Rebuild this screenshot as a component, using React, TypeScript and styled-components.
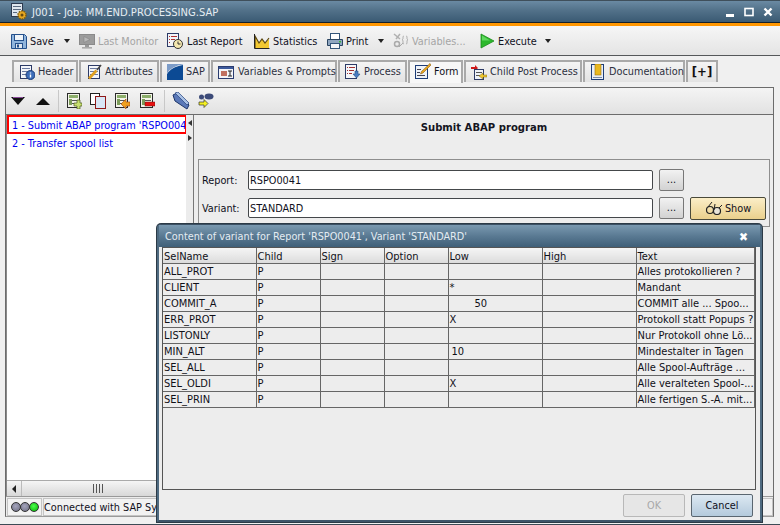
import React from 'react';
import styled, { createGlobalStyle, css } from 'styled-components';

const GlobalStyle = createGlobalStyle`
    html, body {
        margin: 0;
        padding: 0;
        background: #ececec;
    }
    * {
        box-sizing: border-box;
    }
`;

const Window = styled.div`
    position: relative;
    width: 780px;
    height: 525px;
    overflow: hidden;
    display: flex;
    flex-direction: column;
    background: #f0f0f0;
    font-family: "DejaVu Sans Condensed", "DejaVu Sans", sans-serif;
    font-stretch: condensed;
    font-size: 10.8px;
    color: #10101c;
    border-bottom: 1px solid #3c4a55;
`;

const TitleBar = styled.div`
    height: 23px;
    flex: none;
    display: flex;
    align-items: center;
    padding: 0 7px 0 10px;
    gap: 4px;
    color: #e6edf3;
    font-size: 11.1px;
    background: linear-gradient(#6a8aa3 0%, #527189 45%, #3a5a73 100%);
    border-bottom: 1px solid #15202a;
    border-top: 1px solid #3f4f5b;
`;

const TitleText = styled.span`
    flex: 1;
    padding-top: 1px;
`;

const WindowButtons = styled.div`
    display: flex;
    align-items: center;
    gap: 9px;
`;

const OrangeStrip = styled.div`
    height: 3px;
    flex: none;
    background: #ff9600;
`;

const MainToolbar = styled.div`
    height: 30px;
    flex: none;
    display: flex;
    align-items: center;
    padding: 1px 0 0 11px;
    background: linear-gradient(#f6f6f6, #e4e4e4);
    border-bottom: 1px solid #55585a;
`;

const ToolItem = styled.div<{ $w: number; $off?: boolean }>`
    width: ${(p) => p.$w}px;
    flex: none;
    display: flex;
    align-items: center;
    gap: 3px;
    white-space: nowrap;
    color: ${(p) => (p.$off ? '#a5a5a5' : '#10101c')};
`;

const Caret = styled.span<{ $w: number }>`
    width: ${(p) => p.$w}px;
    flex: none;
    &::before {
        content: '';
        display: block;
        width: 0;
        height: 0;
        border-left: 3.5px solid transparent;
        border-right: 3.5px solid transparent;
        border-top: 4px solid #222;
    }
`;

const TabStrip = styled.div`
    height: 31px;
    flex: none;
    display: flex;
    align-items: flex-start;
    padding: 4px 0 0 12px;
    gap: 1px;
    background: #f0f0f0;
`;

const Tab = styled.div<{ $w: number; $active?: boolean }>`
    width: ${(p) => p.$w}px;
    height: 22px;
    flex: none;
    display: flex;
    align-items: center;
    padding: 0 0 1px 5px;
    gap: 3px;
    white-space: nowrap;
    color: #2c3040;
    background: linear-gradient(#f4f4f4, #e3e3e3);
    border: 2px solid #a9a9a9;
    border-bottom: 0;
    ${(p) =>
        p.$active &&
        css`
            height: 23px;
            color: #10101c;
            padding-bottom: 3px;
            background: #f7f7f7;
        `}
`;

const PlusTab = styled(Tab)`
    justify-content: center;
    padding-left: 0;
    font-weight: bold;
    font-size: 13px;
    color: #111;
`;

const Panel = styled.div`
    flex: 1;
    min-height: 0;
    margin: 0 6px 7px 5px;
    display: flex;
    flex-direction: column;
    border: 1px solid #6c6c6c;
    border-bottom-color: #9a9a9a;
`;

const SubToolbar = styled.div`
    height: 27px;
    flex: none;
    display: flex;
    align-items: center;
    padding-left: 5px;
    background: linear-gradient(#f4f4f4, #e2e2e2);
    border-bottom: 1px solid #6c6c6c;
`;

const SubTool = styled.div<{ $w: number }>`
    width: ${(p) => p.$w}px;
    flex: none;
    display: flex;
    align-items: center;
`;

const SubSep = styled.div`
    width: 1px;
    height: 22px;
    flex: none;
    margin: 0 7px 0 2px;
    background: #c8c8c8;
`;

const Body = styled.div`
    flex: 1;
    min-height: 0;
    display: flex;
`;

const LeftColumn = styled.div`
    width: 180px;
    flex: none;
    display: flex;
    flex-direction: column;
    border-left: 1px solid #8a8a8a;
`;

const StepList = styled.div`
    flex: 1;
    background: #fff;
    overflow: hidden;
    color: #0000f0;
`;

const Step = styled.div<{ $selected?: boolean }>`
    height: 18px;
    line-height: 16px;
    padding-left: 5px;
    white-space: nowrap;
    overflow: hidden;
    ${(p) =>
        p.$selected &&
        css`
            height: 19px;
            border: 2px solid #ff0000;
            border-right-width: 1px;
            padding-left: 3px;
            line-height: 17px;
        `}
`;

const StepGap = styled.div`
    height: 2px;
`;

const Scrollbar = styled.div`
    height: 16px;
    flex: none;
    display: flex;
    align-items: center;
    background: linear-gradient(#f5f5f5, #d8d8d8);
    border-top: 1px solid #aaa;
`;

const ScrollArrow = styled.div`
    width: 15px;
    height: 100%;
    flex: none;
    display: flex;
    align-items: center;
    justify-content: center;
    border-right: 1px solid #bbb;
    &::before {
        content: '';
        border-top: 4px solid transparent;
        border-bottom: 4px solid transparent;
        border-right: 4px solid #222;
    }
`;

const Grip = styled.div`
    margin-left: 71px;
    width: 11px;
    height: 9px;
    background: repeating-linear-gradient(90deg, #555 0 1px, transparent 1px 3px);
`;

const Splitter = styled.div`
    width: 8px;
    flex: none;
    display: flex;
    flex-direction: column;
    align-items: center;
    gap: 9px;
    padding-top: 5px;
    background: #ececec;
    border-right: 1px solid #777;
`;

const SplitArrow = styled.div<{ $dir: 'left' | 'right' }>`
    width: 0;
    height: 0;
    border-top: 3.5px solid transparent;
    border-bottom: 3.5px solid transparent;
    ${(p) =>
        p.$dir === 'left'
            ? css`border-right: 4px solid #333;`
            : css`border-left: 4px solid #333;`}
`;

const RightPane = styled.div`
    flex: 1;
    padding: 0 3px 0 4px;
    background: #ededed;
`;

const PaneTitle = styled.div`
    height: 44px;
    padding-top: 6px;
    text-align: center;
    font-weight: bold;
    font-size: 11.2px;
    color: #15151f;
`;

const FieldBox = styled.div`
    height: 68px;
    padding: 9px 3px 0 3px;
    display: flex;
    flex-direction: column;
    gap: 6px;
    border: 1px solid #8e8e8e;
`;

const FieldRow = styled.div`
    height: 22px;
    display: flex;
    align-items: center;
`;

const FieldLabel = styled.label`
    width: 46px;
    flex: none;
`;

const FieldInput = styled.div`
    width: 405px;
    height: 20px;
    flex: none;
    display: flex;
    align-items: center;
    padding-left: 1px;
    background: #fff;
    border: 1px solid #44474a;
    border-radius: 2px;
`;

const DotsButton = styled.div`
    width: 25px;
    height: 22px;
    flex: none;
    margin-left: 6px;
    text-align: center;
    line-height: 20px;
    background: linear-gradient(#f2f2f2, #d2d2d2);
    border: 1px solid #777;
    border-radius: 2px;
`;

const ShowButton = styled.div`
    width: 76px;
    height: 23px;
    flex: none;
    margin-left: 6px;
    display: flex;
    align-items: center;
    justify-content: center;
    gap: 2px;
    background: linear-gradient(#fbeec8, #ead08c);
    border: 1px solid #4a4a3a;
    border-radius: 2px;
`;

const StatusBar = styled.div`
    height: 20px;
    flex: none;
    display: flex;
    gap: 1px;
    padding: 1px 0 0 1px;
    background: #ececec;
    border-top: 1px solid #999;
`;

const Lights = styled.div`
    width: 35px;
    flex: none;
    display: flex;
    align-items: center;
    padding-left: 3px;
    background: #f2f2f2;
    border: 1px solid #c4c4c4;
`;

const Light = styled.div<{ $on?: boolean }>`
    width: 10px;
    height: 10px;
    margin-right: -1px;
    border-radius: 50%;
    border: 1px solid #333;
    background: ${(p) => (p.$on ? 'radial-gradient(circle at 45% 40%, #4dff4d, #00b000)' : 'radial-gradient(circle at 45% 40%, #a4a4bc, #6c6c80)')};
`;

const StatusText = styled.div`
    flex: 1;
    line-height: 17px;
    white-space: nowrap;
    overflow: hidden;
    border: 1px solid #c4c4c4;
    background: #f2f2f2;
`;

/* dialog floats over the form */
const Dialog = styled.div`
    position: absolute;
    left: 157px;
    top: 224px;
    width: 605px;
    height: 298px;
    display: flex;
    flex-direction: column;
    background: #ededed;
    border: 2px solid #4e6a80;
    border-top-width: 1px;
    border-top-color: #3c5165;
    border-bottom-color: #3e5468;
    border-radius: 4px 4px 0 0;
    box-shadow: 0 0 0 1px #2c3a46;
`;

const DialogTitle = styled.div`
    height: 22px;
    flex: none;
    display: flex;
    align-items: center;
    justify-content: space-between;
    padding: 1px 12px 0 6px;
    color: #e4ecf2;
    background: linear-gradient(#7a99b0 0%, #5a7a93 50%, #3f5f78 100%);
`;

const DialogClose = styled.span`
    font-weight: bold;
    font-size: 12px;
    color: #fff;
`;

const TableWrap = styled.div`
    height: 243px;
    flex: none;
    margin: 0 4px 0 3px;
    background: #ededed;
    border: 1px solid #555;
`;

const VariantTable = styled.table`
    width: 592px;
    table-layout: fixed;
    border-collapse: collapse;
    color: #101018;
`;

const HeadCell = styled.th<{ $w?: number }>`
    ${(p) => p.$w && css`width: ${p.$w}px;`}
    height: 15px;
    padding: 2px 0 0 1px;
    text-align: left;
    font-weight: normal;
    font-size: 11px;
    line-height: 13px;
    background: linear-gradient(#f5f5f5, #dcdcdc);
    border-right: 1px solid #666;
    border-bottom: 1px solid #666;
`;

const Cell = styled.td<{ $indent?: number }>`
    height: 16px;
    padding: 1px 0 0 ${(p) => p.$indent ?? 1}px;
    font-size: 11px;
    line-height: 14px;
    white-space: nowrap;
    overflow: hidden;
    border-right: 1px solid #666;
    border-bottom: 1px solid #666;
`;

const DialogFooter = styled.div`
    flex: 1;
    display: flex;
    justify-content: flex-end;
    align-items: flex-start;
    gap: 6px;
    padding: 4px 7px 0 0;
`;

const DialogButton = styled.div<{ $off?: boolean }>`
    width: 62px;
    height: 23px;
    display: flex;
    align-items: center;
    justify-content: center;
    border-radius: 2px;
    ${(p) =>
        p.$off
            ? css`
                  color: #a8a8a8;
                  border: 1px solid #b8b8b8;
                  background: #e6e6e6;
              `
            : css`
                  color: #10101c;
                  border: 1px solid #5a6670;
                  background: linear-gradient(#dce8f2, #b4cadc);
              `}
`;

const Svg = ({ children, w = 16, h = 16 }: { children: React.ReactNode; w?: number; h?: number }) => (
    <svg width={w} height={h} viewBox={`0 0 ${w} ${h}`} style={{ flex: 'none', display: 'block' }}>
        {children}
    </svg>
);

const DocLines = ({ x = 1, y = 1, w = 11, h = 13 }: { x?: number; y?: number; w?: number; h?: number }) => (
    <>
        <rect x={x + 0.5} y={y + 0.5} width={w} height={h} fill="#f4f6fa" stroke="#2c3a66" />
        <path d={`M${x + 2} ${y + 3.5}h${w - 3}M${x + 2} ${y + 6.5}h${w - 3}M${x + 2} ${y + 9.5}h${w - 3}`} stroke="#6a7aa0" />
    </>
);

const GreenDoc = () => (
    <>
        <rect x="1.5" y="0.5" width="12" height="14" fill="#f4f4ea" stroke="#2a2a2a" />
        <rect x="3" y="2" width="9" height="3" fill="#8cae6a" />
        <path d="M3 7.5h9M3 10.5h6" stroke="#555" />
        <rect x="3" y="6" width="3" height="6" fill="#7c9c5a" />
    </>
);

const TitleIcon = () => (
    <Svg w={18} h={18}>
        <rect x="1.5" y="0.5" width="11" height="13" fill="#dfe6ee" stroke="#2c3a50" />
        <path d="M3 3.5h8M3 6.5h8M3 9.5h4" stroke="#5a6a80" />
        <circle cx="12" cy="12" r="4" fill="#e8a820" stroke="#7a5a10" strokeWidth="1.5" strokeDasharray="1.5 1" />
        <circle cx="12" cy="12" r="1.5" fill="#6a4a10" />
    </Svg>
);

const SaveIcon = () => (
    <Svg>
        <path d="M0.5 1.5h13l2 2v12h-15z" fill="#8fb4dc" stroke="#24508c" />
        <rect x="3.5" y="1.5" width="9" height="6" fill="#eef3f8" stroke="#24508c" />
        <rect x="4.5" y="10.5" width="7" height="5" fill="#dfe6ee" stroke="#24508c" />
        <rect x="6" y="11.5" width="2" height="3" fill="#24508c" />
    </Svg>
);

const MonitorIcon = () => (
    <Svg>
        <rect x="0.5" y="1.5" width="15" height="10" fill="#9c9c9c" stroke="#8a8a8a" />
        <path d="M5 3.5l6 3-6 3z" fill="#b8b8b8" stroke="#858585" strokeWidth="0.6" />
        <rect x="6" y="12" width="4" height="2" fill="#999" />
        <rect x="3" y="14" width="10" height="1.6" fill="#aaa" />
    </Svg>
);

const ReportIcon = () => (
    <Svg w={17}>
        <rect x="0.5" y="0.5" width="11" height="13" fill="#f2f4f8" stroke="#2c3a66" />
        <path d="M2 3.5h1M4 3.5h6M2 6.5h1M4 6.5h4M2 9.5h1" stroke="#b03030" />
        <circle cx="11" cy="11" r="4.5" fill="#f4e8b0" stroke="#333" />
        <path d="M11 8.5v2.5h2.5" fill="none" stroke="#333" />
    </Svg>
);

const StatsIcon = () => (
    <Svg w={16}>
        <path d="M1 15V3l4 7 3-4 3 4 4-4v9z" fill="#f2c832" />
        <path d="M1 15V3l4 7 3-4 3 4 4-5" fill="none" stroke="#5a4610" strokeWidth="1.2" />
        <path d="M0.5 1v14.5h15" fill="none" stroke="#222" />
    </Svg>
);

const PrintIcon = () => (
    <Svg>
        <rect x="3.5" y="0.5" width="9" height="6" fill="#fff" stroke="#33557a" />
        <path d="M0.5 6.5h15v6h-15z" fill="#8fa6c0" stroke="#2a4460" />
        <rect x="3.5" y="10.5" width="9" height="5" fill="#f4f6f8" stroke="#33557a" />
        <rect x="12" y="8" width="2" height="1.5" fill="#38b838" />
    </Svg>
);

const VariablesIcon = () => (
    <Svg>
        <path d="M1 1l6 5M7 1L3 6" stroke="#b0b0b0" strokeWidth="1.5" fill="none" />
        <circle cx="4" cy="11" r="2.5" fill="none" stroke="#aaa" strokeWidth="1.5" />
        <path d="M6 14l4-4M11 3c-1 0-1 1-1 2s0 1-1 2c1 0 1 1 1 2s0 2 1 2M13 3c1 0 1 1 1 2s0 1 1 2c-1 0-1 1-1 2s0 2-1 2" stroke="#aaa" fill="none" />
    </Svg>
);

const ExecuteIcon = () => (
    <Svg w={15}>
        <path d="M1 1l13 7-13 7z" fill="#2cb82c" stroke="#1a8a1a" strokeWidth="0.8" />
        <path d="M2 2.5v5h8z" fill="#5ed85e" />
    </Svg>
);

const HeaderIcon = () => (
    <Svg>
        <DocLines />
        <circle cx="11.5" cy="11" r="4.5" fill="#3c6cb8" stroke="#1c3c78" />
        <path d="M11.5 8.5v1M11.5 10.5v3" stroke="#fff" strokeWidth="1.4" />
    </Svg>
);

const AttributesIcon = () => (
    <Svg>
        <DocLines x={2} />
        <path d="M15 1l-4 5" stroke="#444" strokeWidth="1.6" />
        <path d="M10.5 6.5L3 14.5" stroke="#e0a020" strokeWidth="2.6" />
    </Svg>
);

const SapIcon = () => (
    <Svg>
        <path d="M0 16V10C3 5 9 2 16 1v15z" fill="#0c4a94" />
        <path d="M0 0h16v0.6C9 1.6 3 4.6 0 9.5z" fill="#7c9cc8" />
    </Svg>
);

const VariablesTabIcon = () => (
    <Svg w={17}>
        <rect x="0.5" y="2.5" width="15" height="12" fill="#f2f4f8" stroke="#2a3c70" />
        <rect x="1" y="3" width="14" height="2" fill="#3c5a9c" />
        <rect x="3" y="7" width="6" height="5" fill="#c07060" />
        <path d="M10 7h4M12 7v5M10 12h4" stroke="#222" />
    </Svg>
);

const ProcessIcon = () => (
    <Svg>
        <rect x="0.5" y="0.5" width="11" height="14" fill="#f4f6fa" stroke="#2c3a66" />
        <path d="M2 3.5h1M4 3.5h6M2 6.5h1M4 6.5h5M2 9.5h1M4 9.5h3" stroke="#a03030" />
        <path d="M10 7h3v3h2l-3.5 4L8 10h2z" fill="#4a7cc0" stroke="#24508c" strokeWidth="0.6" />
    </Svg>
);

const FormIcon = () => (
    <Svg>
        <rect x="0.5" y="2.5" width="12" height="13" fill="#eef2f8" stroke="#1c3c78" />
        <path d="M2 6.5h4M2 9.5h3M2 12.5h8" stroke="#445" />
        <path d="M15 0.5l1 1.5-8 8-2.5 1 1-2.5z" fill="#eaa820" stroke="#8a5a10" strokeWidth="0.6" />
    </Svg>
);

const ChildIcon = () => (
    <Svg>
        <path d="M0 3h4V1l3 3-3 3V5H0z" fill="#d01818" />
        <rect x="3.5" y="5.5" width="9" height="10" fill="#eef2f8" stroke="#2c3a66" />
        <path d="M5 8.5h6M5 11.5h4" stroke="#555" />
        <path d="M16 11h-4V9l-4 3 4 3v-2h4z" fill="#f0c830" stroke="#8a7010" strokeWidth="0.5" />
    </Svg>
);

const DocumentationIcon = () => (
    <Svg>
        <rect x="1.5" y="0.5" width="12" height="15" fill="#e8eef6" stroke="#1c3c78" />
        <rect x="5" y="0" width="6" height="11" fill="#e8b820" stroke="#9a7010" strokeWidth="0.6" />
        <path d="M3 13.5h9" stroke="#7a8aa8" />
    </Svg>
);

const MoveDown = () => (
    <Svg w={14} h={8}>
        <path d="M0 0h14L7 8z" fill="#111" />
        <path d="M2 0.5h10" stroke="#8a4a9a" />
    </Svg>
);

const MoveUp = () => (
    <Svg w={14} h={7}>
        <path d="M7 0l7 7H0z" fill="#111" />
    </Svg>
);

const AddStep = () => (
    <Svg>
        <GreenDoc />
        <path d="M11 7v3H8v3h3v3h3v-3h2v-3h-2V7z" fill="#c8e070" stroke="#4a5a20" strokeWidth="0.7" />
    </Svg>
);

const CopyStep = () => (
    <Svg>
        <rect x="0.5" y="0.5" width="9" height="11" fill="#fff" stroke="#222" />
        <rect x="5.5" y="3.5" width="10" height="12" fill="#d8e6f6" stroke="#901818" />
    </Svg>
);

const MoveStep = () => (
    <Svg>
        <GreenDoc />
        <path d="M16 9h-4V6L7 11l5 5v-3h4z" fill="#f0a020" stroke="#a04010" strokeWidth="0.6" />
    </Svg>
);

const RemoveStep = () => (
    <Svg>
        <GreenDoc />
        <rect x="6" y="9" width="10" height="4" fill="#e81010" stroke="#701010" strokeWidth="0.5" />
    </Svg>
);

const FolderIcon = () => (
    <Svg w={18} h={18}>
        <path d="M1 3l4-2 12 12-2 4L3 9z" fill="#5a78b8" stroke="#1c3468" />
        <path d="M3 1l3-1 11 11-2 2z" fill="#a8c0e4" stroke="#24407c" strokeWidth="0.7" />
    </Svg>
);

const ChatIcon = () => (
    <Svg w={16} h={16}>
        <ellipse cx="11" cy="3.5" rx="4.5" ry="3" fill="#3c4a78" />
        <ellipse cx="3.5" cy="4" rx="2.5" ry="2.5" fill="#3c4a78" />
        <path d="M1 9h5V6.5l4 4-4 4V12H1z" fill="#f4f020" stroke="#333" strokeWidth="0.7" />
    </Svg>
);

const GlassesIcon = () => (
    <Svg w={18} h={14}>
        <circle cx="5" cy="9" r="3.5" fill="none" stroke="#222" strokeWidth="1.2" />
        <circle cx="12" cy="10" r="3.5" fill="#e8e4d8" stroke="#222" strokeWidth="1.2" />
        <path d="M3 6l4-5M9 9l1-6M14 7l3-3" fill="none" stroke="#222" />
    </Svg>
);

const rows = [
    ['ALL_PROT', 'P', '', 'Alles protokollieren ?'],
    ['CLIENT', 'P', '*', 'Mandant'],
    ['COMMIT_A', 'P', '50', 'COMMIT alle ... Spoo...'],
    ['ERR_PROT', 'P', 'X', 'Protokoll statt Popups ?'],
    ['LISTONLY', 'P', '', 'Nur Protokoll ohne Lö...'],
    ['MIN_ALT', 'P', '10', 'Mindestalter in Tagen'],
    ['SEL_ALL', 'P', '', 'Alle Spool-Aufträge ...'],
    ['SEL_OLDI', 'P', 'X', 'Alle veralteten Spool-...'],
    ['SEL_PRIN', 'P', '', 'Alle fertigen S.-A. mit...'],
];

const lowIndent = (low: string) => (low === '50' ? 26 : low === '10' ? 3 : 1);

const App = () => {
    return (
        <Window>
            <GlobalStyle />
            <TitleBar>
                <TitleIcon />
                <TitleText>J001 - Job: MM.END.PROCESSING.SAP</TitleText>
                <WindowButtons>
                    <Svg w={10} h={10}>
                        <rect x="1" y="7" width="8" height="3" fill="#fff" />
                    </Svg>
                    <Svg w={10} h={10}>
                        <rect x="1" y="1.5" width="8" height="7" fill="none" stroke="#fff" strokeWidth="1.6" />
                    </Svg>
                    <Svg w={10} h={10}>
                        <path d="M1.5 1.5l7 7M8.5 1.5l-7 7" stroke="#fff" strokeWidth="2.4" />
                    </Svg>
                </WindowButtons>
            </TitleBar>
            <OrangeStrip />
            <MainToolbar>
                <ToolItem $w={53}><SaveIcon />Save</ToolItem>
                <Caret $w={15} />
                <ToolItem $w={88} $off><MonitorIcon />Last Monitor</ToolItem>
                <ToolItem $w={87}><ReportIcon />Last Report</ToolItem>
                <ToolItem $w={73}><StatsIcon />Statistics</ToolItem>
                <ToolItem $w={51}><PrintIcon />Print</ToolItem>
                <Caret $w={15} />
                <ToolItem $w={87} $off><VariablesIcon />Variables...</ToolItem>
                <ToolItem $w={65}><ExecuteIcon />Execute</ToolItem>
                <Caret $w={10} />
            </MainToolbar>
            <TabStrip>
                <Tab $w={66}><HeaderIcon />Header</Tab>
                <Tab $w={80}><AttributesIcon />Attributes</Tab>
                <Tab $w={50}><SapIcon />SAP</Tab>
                <Tab $w={126}><VariablesTabIcon />Variables &amp; Prompts</Tab>
                <Tab $w={69}><ProcessIcon />Process</Tab>
                <Tab $w={55} $active><FormIcon />Form</Tab>
                <Tab $w={118}><ChildIcon />Child Post Process</Tab>
                <Tab $w={102}><DocumentationIcon />Documentation</Tab>
                <PlusTab $w={32}>[+]</PlusTab>
            </TabStrip>
            <Panel>
                <SubToolbar>
                    <SubTool $w={25}><MoveDown /></SubTool>
                    <SubTool $w={20}><MoveUp /></SubTool>
                    <SubSep />
                    <SubTool $w={24}><AddStep /></SubTool>
                    <SubTool $w={24}><CopyStep /></SubTool>
                    <SubTool $w={25}><MoveStep /></SubTool>
                    <SubTool $w={23}><RemoveStep /></SubTool>
                    <SubSep />
                    <SubTool $w={26}><FolderIcon /></SubTool>
                    <SubTool $w={20}><ChatIcon /></SubTool>
                </SubToolbar>
                <Body>
                    <LeftColumn>
                        <StepList>
                            <Step $selected>1 - Submit ABAP program 'RSPO0041'</Step>
                            <StepGap />
                            <Step>2 - Transfer spool list</Step>
                        </StepList>
                        <Scrollbar>
                            <ScrollArrow />
                            <Grip />
                        </Scrollbar>
                    </LeftColumn>
                    <Splitter>
                        <SplitArrow $dir="left" />
                        <SplitArrow $dir="right" />
                    </Splitter>
                    <RightPane>
                        <PaneTitle>Submit ABAP program</PaneTitle>
                        <FieldBox>
                            <FieldRow>
                                <FieldLabel>Report:</FieldLabel>
                                <FieldInput>RSPO0041</FieldInput>
                                <DotsButton>...</DotsButton>
                            </FieldRow>
                            <FieldRow>
                                <FieldLabel>Variant:</FieldLabel>
                                <FieldInput>STANDARD</FieldInput>
                                <DotsButton>...</DotsButton>
                                <ShowButton><GlassesIcon />Show</ShowButton>
                            </FieldRow>
                        </FieldBox>
                    </RightPane>
                </Body>
                <StatusBar>
                    <Lights>
                        <Light />
                        <Light />
                        <Light $on />
                    </Lights>
                    <StatusText>Connected with SAP System</StatusText>
                </StatusBar>
            </Panel>
            <Dialog>
                <DialogTitle>
                    <span>Content of variant for Report 'RSPO0041', Variant 'STANDARD'</span>
                    <DialogClose>✖</DialogClose>
                </DialogTitle>
                <TableWrap>
                    <VariantTable>
                        <thead>
                            <tr>
                                <HeadCell $w={93}>SelName</HeadCell>
                                <HeadCell $w={64}>Child</HeadCell>
                                <HeadCell $w={64}>Sign</HeadCell>
                                <HeadCell $w={64}>Option</HeadCell>
                                <HeadCell $w={94}>Low</HeadCell>
                                <HeadCell $w={94}>High</HeadCell>
                                <HeadCell>Text</HeadCell>
                            </tr>
                        </thead>
                        <tbody>
                            {rows.map(([name, child, low, text]) => (
                                <tr key={name}>
                                    <Cell>{name}</Cell>
                                    <Cell>{child}</Cell>
                                    <Cell />
                                    <Cell />
                                    <Cell $indent={lowIndent(low)}>{low}</Cell>
                                    <Cell />
                                    <Cell>{text}</Cell>
                                </tr>
                            ))}
                        </tbody>
                    </VariantTable>
                </TableWrap>
                <DialogFooter>
                    <DialogButton $off>OK</DialogButton>
                    <DialogButton>Cancel</DialogButton>
                </DialogFooter>
            </Dialog>
        </Window>
    );
};

export default App;
